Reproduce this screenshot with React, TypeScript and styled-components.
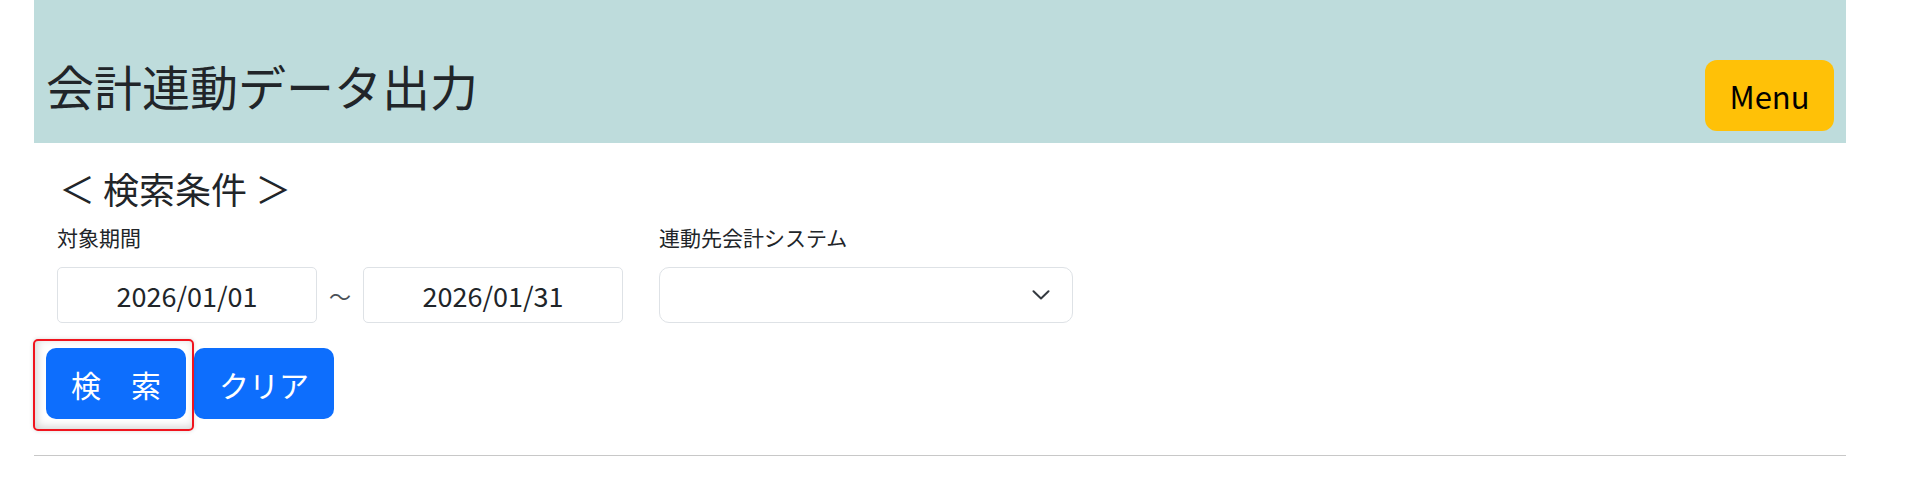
import React from 'react';
import styled, { createGlobalStyle } from 'styled-components';

const FONT = `"Noto Sans CJK JP", "Noto Sans", sans-serif`;

const GlobalStyle = createGlobalStyle`
	body {
		margin: 0;
		background: #fff;
		color: #212529;
		font-family: ${FONT};
	}
`;

const App = () => {
	return (
		<>
			<GlobalStyle />
			<Page>
				<Header>
					<Title>会計連動データ出力</Title>
					<MenuButton type="button">Menu</MenuButton>
				</Header>

				<SearchForm>
					<SectionTitle>＜ 検索条件 ＞</SectionTitle>
					<FieldRow>
						<Field>
							<Label>対象期間</Label>
							<DateRange>
								<DateInput readOnly value="2026/01/01" />
								<RangeMark>～</RangeMark>
								<DateInput readOnly value="2026/01/31" />
							</DateRange>
						</Field>
						<Field>
							<Label>連動先会計システム</Label>
							<SelectBox role="combobox">
								<svg width="18" height="10" viewBox="0 0 18 10">
									<path
										d="M1.5 1.2l7.5 7.3 7.5-7.3"
										fill="none"
										stroke="#343a40"
										strokeWidth="2"
										strokeLinecap="round"
										strokeLinejoin="round"
									/>
								</svg>
							</SelectBox>
						</Field>
					</FieldRow>
				</SearchForm>

				<ButtonRow>
					<Focused>
						<PrimaryButton type="button">検　索</PrimaryButton>
						<Highlight />
					</Focused>
					<PrimaryButton type="button">クリア</PrimaryButton>
				</ButtonRow>

				<Divider />
			</Page>
		</>
	);
};

const Page = styled.div`
	margin-left: 34px;
	width: 1812px;
`;

const Header = styled.header`
	display: flex;
	align-items: flex-end;
	justify-content: space-between;
	box-sizing: border-box;
	height: 143px;
	padding: 0 12px 12px 12px;
	background: #bedcdc;
`;

const Title = styled.h1`
	margin: 0 0 22px;
	font-size: 48px;
	font-weight: 400;
	line-height: 1;
`;

const MenuButton = styled.button`
	width: 129px;
	height: 71px;
	padding: 0;
	border: none;
	border-radius: 12px;
	background: #ffc107;
	color: #000;
	font: 400 31px/1 ${FONT};
`;

const SearchForm = styled.div`
	padding-left: 23px;
`;

const SectionTitle = styled.h3`
	margin: 27px 0 0;
	padding-left: 2px;
	font-size: 36px;
	font-weight: 400;
	line-height: 1;
`;

const FieldRow = styled.div`
	display: flex;
	gap: 36px;
	margin-top: 21px;
`;

const Field = styled.div`
	display: flex;
	flex-direction: column;
	gap: 19px;
`;

const Label = styled.label`
	font-size: 21px;
	line-height: 1;
`;

const DateRange = styled.div`
	display: flex;
	align-items: center;
`;

const DateInput = styled.input`
	box-sizing: border-box;
	width: 260px;
	height: 56px;
	padding: 0;
	border: 1px solid #dee2e6;
	border-radius: 5px;
	background: #fff;
	color: #212529;
	text-align: center;
	font: 400 27px/1 ${FONT};
	outline: none;
`;

const RangeMark = styled.span`
	width: 46px;
	text-align: center;
	font-size: 22px;
	color: #495057;
`;

const SelectBox = styled.div`
	display: flex;
	align-items: center;
	justify-content: flex-end;
	box-sizing: border-box;
	width: 414px;
	height: 56px;
	padding-right: 22px;
	border: 1px solid #dee2e6;
	border-radius: 10px;
	background: #fff;
`;

const ButtonRow = styled.div`
	display: flex;
	gap: 8px;
	margin-top: 25px;
	padding-left: 12px;
`;

const Focused = styled.div`
	position: relative;
	display: flex;
`;

const Highlight = styled.div`
	position: absolute;
	top: -9px;
	left: -13px;
	right: -8px;
	bottom: -12px;
	border: 2px solid #f0141e;
	border-radius: 5px;
	box-shadow: inset 2px -2px 8px rgba(0, 0, 0, 0.18), 0 0 4px rgba(0, 0, 0, 0.15);
	pointer-events: none;
`;

const PrimaryButton = styled.button`
	height: 71px;
	padding: 0 25px;
	border: none;
	border-radius: 10px;
	background: #0d6efd;
	color: #fff;
	font: 400 30px/1 ${FONT};
`;

const Divider = styled.hr`
	margin: 36px 0 0;
	border: 0;
	border-top: 1px solid #c8c8c8;
`;

export default App;
